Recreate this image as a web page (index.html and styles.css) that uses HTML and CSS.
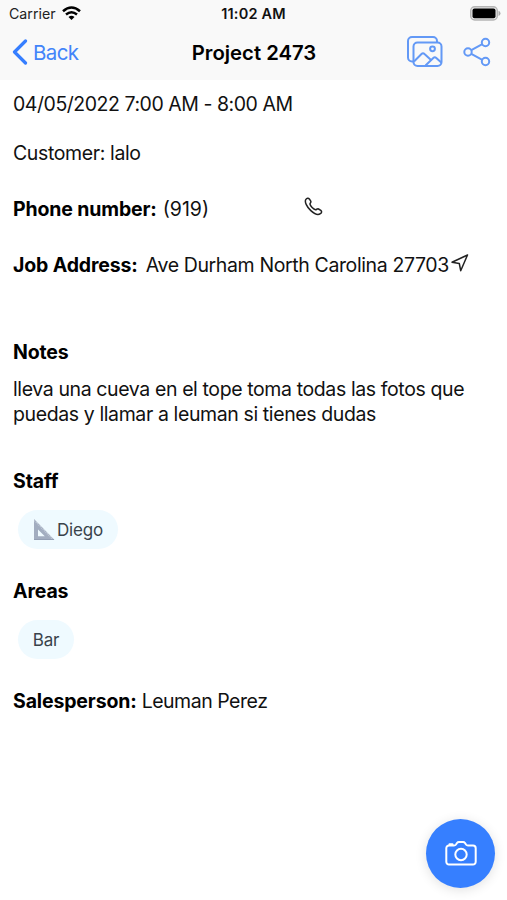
FILE: index.html
```html
<!DOCTYPE html>
<html lang="en">
<head>
<meta charset="utf-8">
<title>Project 2473</title>
<link rel="stylesheet" href="styles.css">
</head>
<body>
<header class="header">
  <div class="status">
    <div class="carrier"><span>Carrier</span>
      <svg width="19" height="15" viewBox="0 0 19 15" fill="none" stroke="#000" stroke-width="2.5"><path d="M1 5.3Q9.500-2.300 18 5.300M4 8.500Q9.500 3.900 15 8.500"/><path d="M6.500 11Q9.500 8.500 12.500 11L9.500 14Z" fill="#000" stroke="none"/></svg>
    </div>
    <strong class="time">11:02 AM</strong>
    <svg class="battery" width="31" height="15" viewBox="0 0 31 15"><rect x=".7" y=".7" width="26.600" height="13.300" rx="4" fill="#e8e8e8" stroke="#b5b5b5" stroke-width="1.400"/><rect x="2.500" y="2.500" width="23" height="9.700" rx="2" fill="#000"/><path d="M28.500 4.800q2 .7 2 2.600t-2 2.600z" fill="#aaa"/></svg>
  </div>
  <nav class="nav">
    <a class="back"><svg width="16" height="26" viewBox="0 0 16 26" fill="none" stroke="#367eff" stroke-width="3.200" stroke-linecap="round" stroke-linejoin="round"><path d="M13.500 2 2.500 13l11 11"/></svg><span>Back</span></a>
    <h1 class="title">Project 2473</h1>
    <div class="actions">
      <svg width="36" height="32" viewBox="0 0 36 32" fill="none" stroke="#6399f6" stroke-width="2" stroke-linejoin="round"><path d="M6.500 25.500H5a4 4 0 0 1-4-4V5a4 4 0 0 1 4-4h21a4 4 0 0 1 4 4v1.500"/><rect x="6.500" y="6.500" width="28" height="23.500" rx="4"/><circle cx="25.500" cy="12.800" r="2.400"/><path d="m7 25.500 7.500-7.500q1.500-1.500 3 0l6 5.500M18.500 29.500l7.800-7.500q1.500-1.400 3 0l5 4.500"/></svg>
      <svg width="28" height="30" viewBox="0 0 28 30" fill="none" stroke="#6399f6" stroke-width="2"><circle cx="5" cy="15" r="3.700"/><circle cx="22.500" cy="5.500" r="3.700"/><circle cx="22.500" cy="24.500" r="3.700"/><path d="m8.300 13.200 11-6M8.300 16.800l11 6"/></svg>
    </div>
  </nav>
</header>
<main class="content">
  <p class="row date">04/05/2022 7:00 AM - 8:00 AM</p>
  <p class="row customer">Customer: lalo</p>
  <p class="row phone"><b class="label">Phone number:</b><span class="phone-number">(919)</span>
    <svg width="19" height="19" viewBox="0 0 20 20" fill="none" stroke="#222" stroke-width="1.600" stroke-linejoin="round"><path d="M2 2.500C3 1.200 4.600.8 5.600 2l1.500 2.400c.7 1.300-.9 2-.8 3.200.3 2 3.800 5.400 5.800 5.800 1.200.1 1.900-1.500 3.200-.8L17.700 14c1.300 1 .9 2.600-.5 3.600-2.400 1.800-6 .5-10-3.200C3.200 10.700.2 5 2 2.500Z"/></svg></p>
  <p class="row address"><b class="label">Job Address:</b><span class="address-text">Ave Durham North Carolina 27703</span><svg width="18" height="18" viewBox="0 0 18 18" fill="none" stroke="#222" stroke-width="1.500" stroke-linejoin="round"><path d="M16.500 1 1 8.300l7.300 1.200 1.400 7.200Z"/></svg></p>
  <h2 class="row notes-title">Notes</h2>
  <p class="notes">lleva una cueva en el tope toma todas las fotos que<br>puedas y llamar a leuman si tienes dudas</p>
  <h2 class="row staff-title">Staff</h2>
  <div class="chip staff-chip"><svg width="22" height="22" viewBox="0 0 22 22"><path fill="#a2adc0" fill-rule="evenodd" d="M1 0v21h20.500ZM5 10.500v6.800h6.800Z"/><path d="M1.500 1.500 20 20.500" stroke="#c3cbd8" stroke-width="1.500" stroke-dasharray="1 1"/><path d="M1 20.500h20" stroke="#939fb4"/></svg><span>Diego</span></div>
  <h2 class="row areas-title">Areas</h2>
  <div class="chip area-chip"><span>Bar</span></div>
  <p class="row sales"><b class="label">Salesperson:</b><span class="sales-name">Leuman Perez</span></p>
</main>
<button class="camera" aria-label="Camera"><svg width="32" height="26" viewBox="0 0 32 26" fill="none" stroke="#fff" stroke-width="2" stroke-linejoin="round"><path d="M4 4.500h5q1.300 0 2-1l1-1.500q.7-1 2-1h4q1.300 0 2 1l1 1.500q.7 1 2 1h5a2.700 2.700 0 0 1 2.700 2.700v13.600a2.700 2.700 0 0 1-2.700 2.700H4a2.700 2.700 0 0 1-2.700-2.700V7.200A2.700 2.700 0 0 1 4 4.500Z"/><circle cx="16" cy="13.500" r="5.700"/><path d="M4.500 4V3.200h3V4"/></svg></button>
</body>
</html>
```

FILE: styles.css
```css
* { box-sizing: border-box; }
body { margin: 0; height: 900px; overflow: hidden; background: #fff; color: #111; font-family: Inter, "Liberation Sans", sans-serif; font-size: 19.5px; }
svg { display: block; flex: none; }
p, h1, h2 { margin: 0; }
b, h2 { font-weight: 700; color: #000; }
.header { height: 80px; background: #f9f9f9; }
.status { height: 27px; display: grid; grid-template-columns: 1fr auto 1fr; align-items: center; padding: 0 6px 0 9px; font-size: 14.2px; }
.carrier { display: flex; align-items: center; gap: 6px; color: #222; }
.time { font-weight: 600; font-size: 14.5px; letter-spacing: .2px; margin-left: -3px; }
.battery { justify-self: end; }
.nav { height: 50px; display: grid; grid-template-columns: 1fr auto 1fr; align-items: center; padding: 0 16px 0 12px; }
.back { display: flex; align-items: center; gap: 5px; color: #4284fa; font-size: 20.5px; letter-spacing: -.6px; }
.title { font-size: 20.3px; font-weight: 600; color: #000; margin-left: 5px; }
.actions { display: flex; align-items: center; justify-content: flex-end; gap: 20px; }
.content { padding: 12px 13px 0; }
.row { display: flex; align-items: center; height: 24px; white-space: nowrap; font-size: 19.5px; letter-spacing: -.38px; }
.date { letter-spacing: -.46px; }
.row .label, h2.row { letter-spacing: -.14px; }
.customer { margin-top: 25px; }
.phone, .address { margin-top: 32px; }
.phone-number { margin-left: 6px; letter-spacing: 0; }
.phone svg { margin: -5px 0 0 95px; }
.address-text { margin-left: 8px; }
.address svg { margin: -5px 0 0 2px; }
.notes-title { margin-top: 63px; }
.notes { margin-top: 13px; line-height: 24.5px; white-space: nowrap; letter-spacing: -.39px; }
.staff-title { margin-top: 43px; }
.chip { display: flex; align-items: center; justify-content: center; height: 39px; margin: 17px 0 0 5px; border-radius: 20px; background: #effaff; color: #39434b; font-size: 17px; letter-spacing: -.2px; }
.staff-chip { width: 100px; gap: 2px; }
.area-chip { width: 56px; }
.areas-title { margin-top: 30px; }
.sales { margin-top: 30px; }
.sales-name { margin-left: 5px; letter-spacing: -.48px; }
.camera { position: absolute; left: 426px; top: 819px; width: 69px; height: 69px; padding: 0; border: 0; border-radius: 50%; background: #367fff; box-shadow: 0 2px 12px rgba(0,0,0,.12); display: flex; align-items: center; justify-content: center; }
```
